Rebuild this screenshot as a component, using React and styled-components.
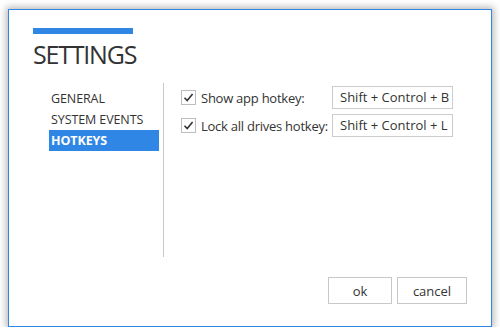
import React from 'react';
import styled, {createGlobalStyle} from 'styled-components';

const GlobalStyle = createGlobalStyle`
  html, body {
    margin: 0;
    padding: 0;
    background: #fff;
  }
  body {
    font-family: "Open Sans", "Noto Sans", "Liberation Sans", sans-serif;
    color: #333;
  }
`;

const Page = styled.div`
  padding: 9px 0 0 8px;
`;

const Window = styled.div`
  box-sizing: border-box;
  width: 484px;
  height: 318px;
  border: 1px solid #2f86e4;
  background: #fff;
  box-shadow: 0 0 7px 2px rgba(0, 0, 0, 0.28);
  padding: 18px 24px 22px 24px;
  display: flex;
  flex-direction: column;
`;

const Header = styled.div`
  display: flex;
  flex-direction: column;
`;

const AccentBar = styled.div`
  width: 100px;
  height: 6px;
  background: #2f86e4;
`;

const Title = styled.h1`
  margin: 5px 0 0 0;
  font-size: 25px;
  font-weight: 400;
  line-height: 30px;
  color: #333;
  letter-spacing: -1.2px;
`;

const Body = styled.div`
  flex: 1;
  display: flex;
  margin-top: 14px;
`;

const Nav = styled.ul`
  list-style: none;
  margin: 0 0 0 16px;
  padding: 5px 0 0 0;
  width: 110px;
`;

const NavItem = styled.li`
  height: 21px;
  line-height: 21px;
  padding-left: 2px;
  font-size: 12.5px;
  letter-spacing: -0.1px;
  font-weight: ${p => (p.active ? 700 : 400)};
  color: ${p => (p.active ? '#fff' : '#333')};
  background: ${p => (p.active ? '#2f86e4' : 'transparent')};
`;

const Divider = styled.div`
  width: 1px;
  background: #c8c8c8;
  margin-left: 4px;
  margin-bottom: 20px;
`;

const Settings = styled.div`
  display: flex;
  flex-direction: column;
  gap: 5px;
  padding: 3px 0 0 17px;
`;

const Row = styled.div`
  display: flex;
  align-items: center;
  height: 23px;
`;

const CheckLabel = styled.label`
  display: flex;
  align-items: center;
  width: 151px;
  font-size: 13px;
  letter-spacing: -0.25px;
  color: #333;
`;

const Box = styled.span`
  box-sizing: border-box;
  width: 15px;
  height: 15px;
  border: 1px solid #bdbdbd;
  background: #fff;
  display: flex;
  align-items: center;
  justify-content: center;
  margin-right: 5px;
`;

const HotkeyField = styled.div`
  box-sizing: border-box;
  width: 121px;
  height: 23px;
  border: 1px solid #ccc;
  font-size: 13px;
  letter-spacing: 0;
  line-height: 21px;
  padding-left: 7px;
  color: #333;
  white-space: nowrap;
`;

const Footer = styled.div`
  display: flex;
  justify-content: flex-end;
  gap: 5px;
`;

const Button = styled.button`
  box-sizing: border-box;
  width: ${p => p.w}px;
  height: 27px;
  border: 1px solid #c8c8c8;
  background: #fff;
  font-family: inherit;
  font-size: 13px;
  color: #333;
  padding: 0;
`;

function Check() {
  return (
    <Box>
      <svg width="11" height="11" viewBox="0 0 11 11">
        <path d="M1.5 5.8 L4.2 8.5 L9.6 2" fill="none" stroke="#333" strokeWidth="1.6" />
      </svg>
    </Box>
  );
}

const hotkeys = [
  {label: 'Show app hotkey:', value: 'Shift + Control + B'},
  {label: 'Lock all drives hotkey:', value: 'Shift + Control + L'},
];

export default function App() {
  return (
    <Page>
      <GlobalStyle />
      <Window>
        <Header>
          <AccentBar />
          <Title>SETTINGS</Title>
        </Header>
        <Body>
          <Nav>
            <NavItem>GENERAL</NavItem>
            <NavItem>SYSTEM EVENTS</NavItem>
            <NavItem active>HOTKEYS</NavItem>
          </Nav>
          <Divider />
          <Settings>
            {hotkeys.map(h => (
              <Row key={h.label}>
                <CheckLabel>
                  <Check />
                  {h.label}
                </CheckLabel>
                <HotkeyField>{h.value}</HotkeyField>
              </Row>
            ))}
          </Settings>
        </Body>
        <Footer>
          <Button w={64}>ok</Button>
          <Button w={70}>cancel</Button>
        </Footer>
      </Window>
    </Page>
  );
}
